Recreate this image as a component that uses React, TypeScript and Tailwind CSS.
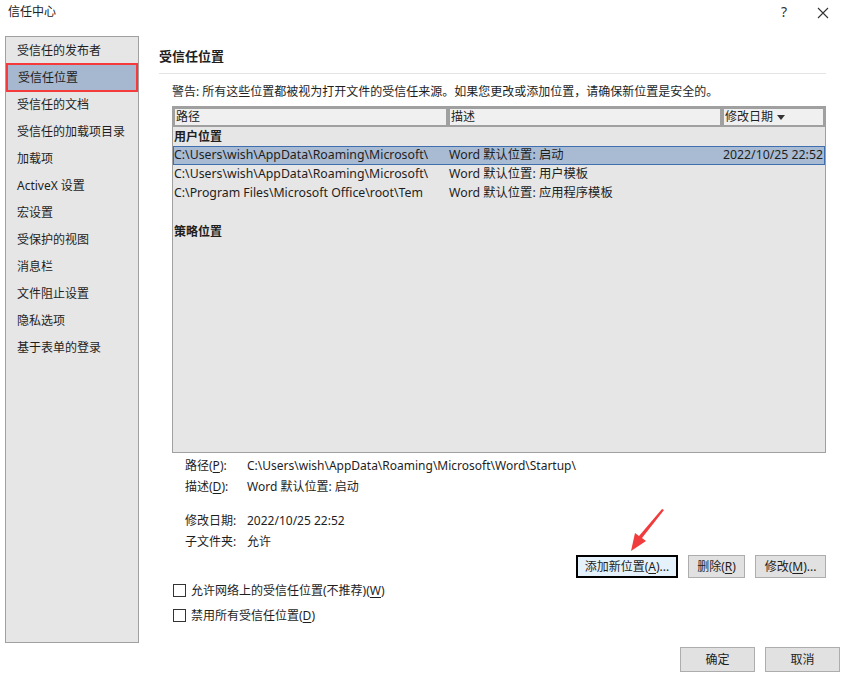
import React from "react";

const F = { fontFamily: '"Segoe UI", "Noto Sans", "Noto Sans CJK SC", sans-serif' };

const sideItems = [
  "受信任的发布者",
  "受信任位置",
  "受信任的文档",
  "受信任的加载项目录",
  "加载项",
  "ActiveX 设置",
  "宏设置",
  "受保护的视图",
  "消息栏",
  "文件阻止设置",
  "隐私选项",
  "基于表单的登录",
];

function U({ c }: { c: string }) {
  return <span className="underline underline-offset-2">{c}</span>;
}

export default function App() {
  return (
    <div
      className="w-[845px] h-[677px] bg-white text-[12px] text-[#1e1e1e] relative flex flex-col overflow-hidden"
      style={F}
    >
      {/* Title bar */}
      <div className="h-[36px] flex items-start pt-[3px]">
        <div className="pl-[8px] text-[12px] text-[#222] leading-[18px]">信任中心</div>
        <div className="ml-auto flex items-center pr-[16px] gap-[30px] leading-[18px]">
          <span className="text-[14px] text-[#333]">?</span>
          <svg width="12" height="12" viewBox="0 0 12 12" className="mt-[1px]">
            <path d="M1 1 L11 11 M11 1 L1 11" stroke="#333" strokeWidth="1.1" />
          </svg>
        </div>
      </div>

      {/* Body */}
      <div className="flex flex-1 min-h-0">
        {/* Sidebar */}
        <div className="ml-[5px] w-[134px] h-[607px] border border-[#a0a0a0] bg-[#e6e6e6] flex flex-col">
          {sideItems.map((s, i) =>
            i === 1 ? (
              <div
                key={s}
                className="h-[29px] border-[2px] border-[#f43a3a] bg-[#a6b8cf] pl-[10px] flex items-center leading-none my-[-1px] relative"
              >
                {s}
              </div>
            ) : (
              <div key={s} className="h-[27px] pl-[11px] flex items-center leading-none">
                {s}
              </div>
            )
          )}
        </div>

        {/* Main */}
        <div className="ml-[20px] w-[667px] flex flex-col">
          <div className="pt-[11px] font-bold text-[13px] leading-[18px]">受信任位置</div>
          <div className="mt-[8px] h-px bg-[#e3e3e3]" />
          <div className="ml-[13px] mt-[10px] leading-[16px]">
            警告: 所有这些位置都被视为打开文件的受信任来源。如果您更改或添加位置，请确保新位置是安全的。
          </div>

          {/* Table */}
          <div className="ml-[13px] mt-[6px] w-[654px] h-[347px] border border-[#a0a0a0] bg-[#e6e6e6] flex flex-col">
            <div className="flex h-[20px]">
              <div className="w-[275px] border-2 border-[#a0a0a0] bg-[#f0f0f0] pl-[1px] flex items-center leading-none">路径</div>
              <div className="w-[274px] border-2 border-[#a0a0a0] bg-[#f0f0f0] pl-[1px] flex items-center leading-none">描述</div>
              <div className="flex-1 border-2 border-[#a0a0a0] bg-[#f0f0f0] pl-[1px] flex items-center leading-none">
                修改日期
                <svg width="8" height="5" viewBox="0 0 8 5" className="ml-[4px]">
                  <path d="M0 0 L8 0 L4 5 Z" fill="#333" />
                </svg>
              </div>
            </div>
            <div className="h-[19px] pl-[1px] font-bold flex items-center leading-none">用户位置</div>
            <div className="h-[19px] bg-[#a8bbd3] border border-[#3f6fae] flex items-center leading-none text-[12.3px]">
              <div className="w-[274px] whitespace-nowrap">C:\Users\wish\AppData\Roaming\Microsoft\</div>
              <div className="w-[274px] pl-[1px] whitespace-nowrap">Word 默认位置: 启动</div>
              <div className="flex-1 text-right pr-[1px] whitespace-nowrap">2022/10/25 22:52</div>
            </div>
            <div className="h-[19px] border border-transparent flex items-center leading-none text-[12.3px]">
              <div className="w-[274px] whitespace-nowrap">C:\Users\wish\AppData\Roaming\Microsoft\</div>
              <div className="w-[274px] pl-[1px] whitespace-nowrap">Word 默认位置: 用户模板</div>
            </div>
            <div className="h-[19px] border border-transparent flex items-center leading-none text-[12.3px]">
              <div className="w-[274px] whitespace-nowrap">C:\Program Files\Microsoft Office\root\Tem</div>
              <div className="w-[274px] pl-[1px] whitespace-nowrap">Word 默认位置: 应用程序模板</div>
            </div>
            <div className="h-[19px]" />
            <div className="h-[19px] pl-[1px] font-bold flex items-center leading-none">策略位置</div>
          </div>

          {/* Details */}
          <div className="ml-[26px] mt-[2px] flex flex-col">
            <div className="flex h-[21px] items-center">
              <div className="w-[62px]">路径(<U c="P" />):</div>
              <div>C:\Users\wish\AppData\Roaming\Microsoft\Word\Startup\</div>
            </div>
            <div className="flex h-[21px] items-center">
              <div className="w-[62px]">描述(<U c="D" />):</div>
              <div>Word 默认位置: 启动</div>
            </div>
            <div className="h-[13px]" />
            <div className="flex h-[21px] items-center">
              <div className="w-[62px]">修改日期:</div>
              <div>2022/10/25 22:52</div>
            </div>
            <div className="flex h-[21px] items-center">
              <div className="w-[62px]">子文件夹:</div>
              <div>允许</div>
            </div>
          </div>

          {/* Buttons */}
          <div className="flex justify-end gap-[10px] mt-[3px] w-[667px]">
            <div className="w-[102px] h-[23px] border-2 border-black bg-[#e5f1fb] flex items-center justify-center leading-none">
              添加新位置(<U c="A" />)...
            </div>
            <div className="w-[57px] h-[23px] border border-[#adadad] bg-[#e1e1e1] flex items-center justify-center leading-none">
              删除(<U c="R" />)
            </div>
            <div className="w-[71px] h-[23px] border border-[#adadad] bg-[#e1e1e1] flex items-center justify-center leading-none">
              修改(<U c="M" />)...
            </div>
          </div>

          {/* Checkboxes */}
          <div className="ml-[14px] mt-[0px] flex flex-col">
            <div className="flex items-center h-[25px]">
              <div className="w-[13px] h-[13px] border border-[#333] bg-white mr-[5px]" />
              允许网络上的受信任位置(不推荐)(<U c="W" />)
            </div>
            <div className="flex items-center h-[25px]">
              <div className="w-[13px] h-[13px] border border-[#333] bg-white mr-[5px]" />
              禁用所有受信任位置(<U c="D" />)
            </div>
          </div>
        </div>
      </div>

      {/* Bottom buttons */}
      <div className="h-[35px] flex justify-end items-start gap-[10px] pr-[5px] pt-[5px]">
        <div className="w-[75px] h-[25px] border border-[#adadad] bg-[#e1e1e1] flex items-center justify-center leading-none">确定</div>
        <div className="w-[75px] h-[25px] border border-[#adadad] bg-[#e1e1e1] flex items-center justify-center leading-none">取消</div>
      </div>

      {/* Red arrow annotation */}
      <svg className="absolute left-[626px] top-[508px]" width="42" height="46" viewBox="0 0 42 46">
        <path d="M38 2 L16 30 L20 33 L5 43 L9 25 L13 28 L36 1 Z" fill="#f03c3c" />
      </svg>
    </div>
  );
}
